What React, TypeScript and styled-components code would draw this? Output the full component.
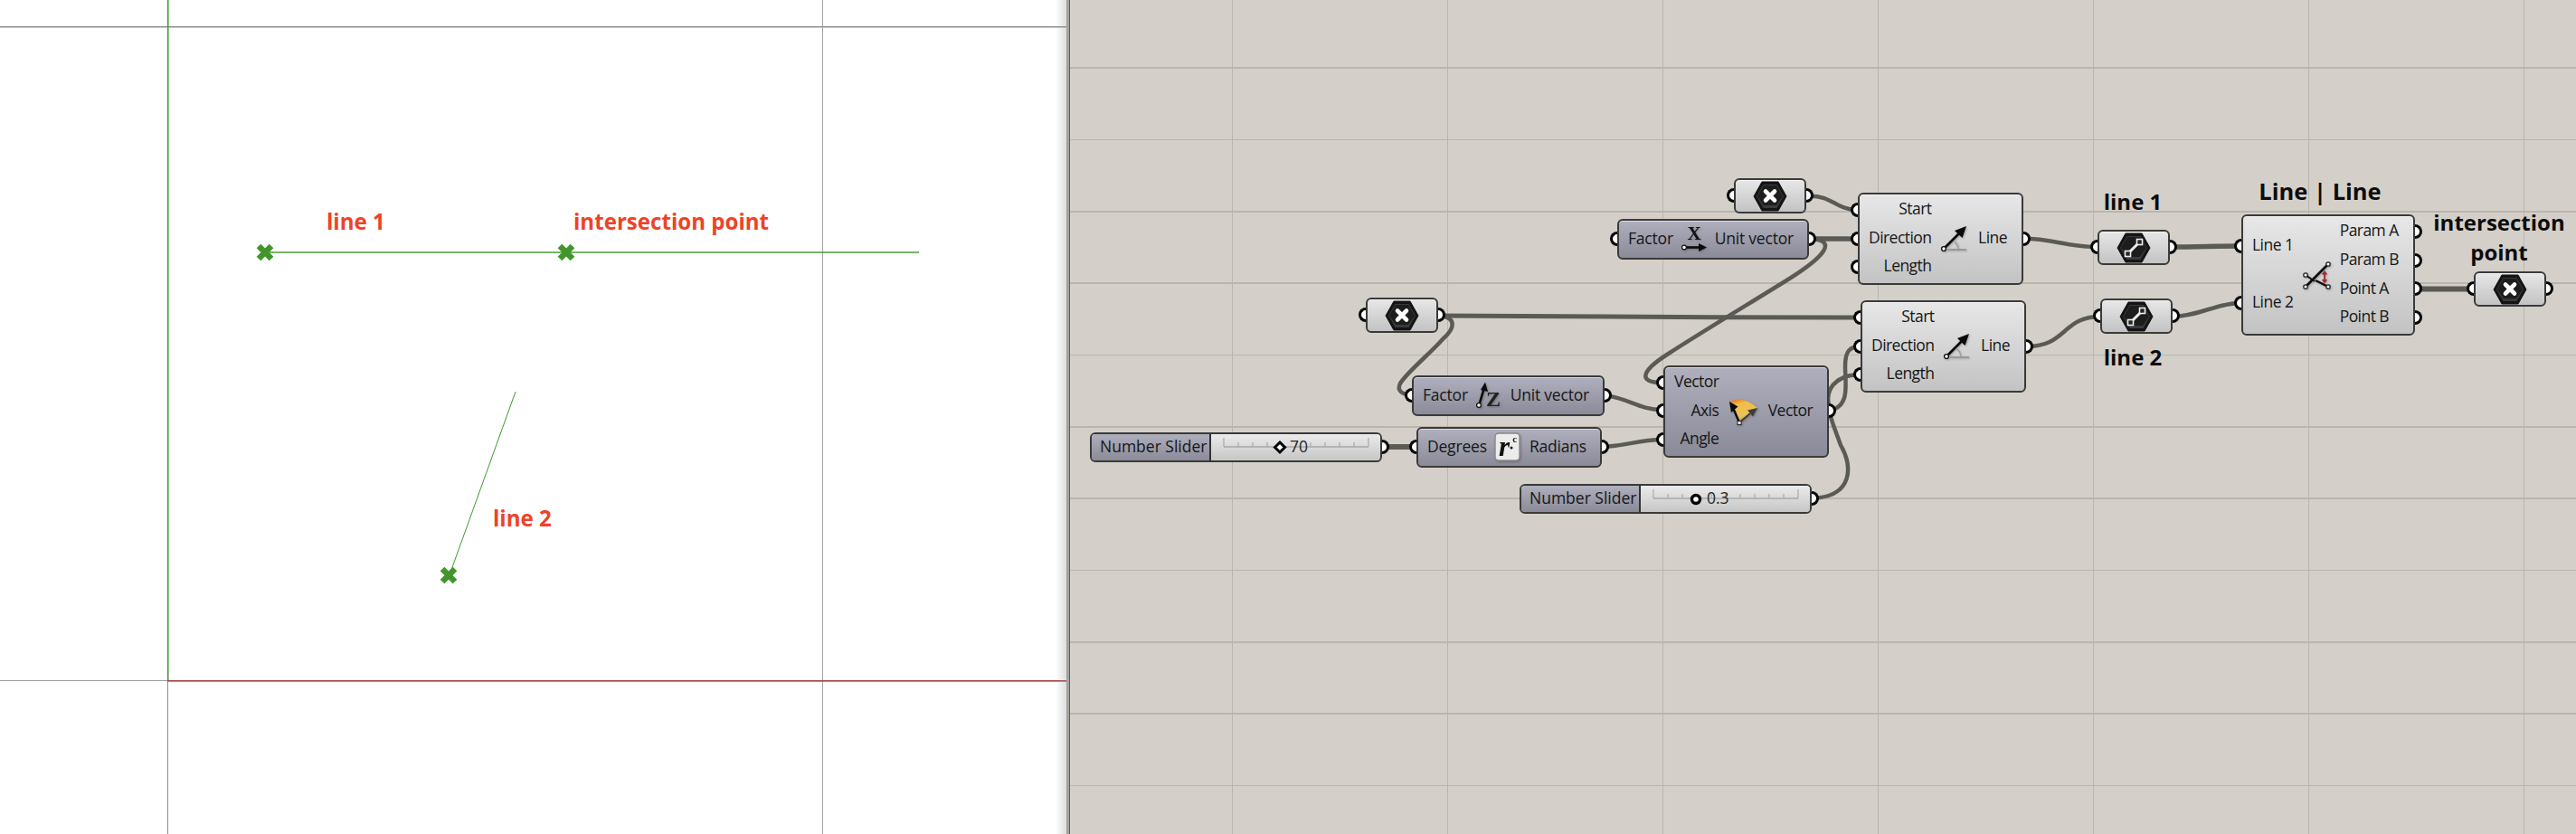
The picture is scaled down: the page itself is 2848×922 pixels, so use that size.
import React from "react";
import styled, { createGlobalStyle } from "styled-components";

const CANVAS_X = 1183;

const Global = createGlobalStyle`
  html, body { margin: 0; padding: 0; background: #fff; }
  body { font-family: "Open Sans", "Noto Sans", sans-serif; }
`;

const Page = styled.div`
  display: flex;
  width: 2848px;
  height: 922px;
  overflow: hidden;
`;

const Viewport = styled.section`
  position: relative;
  flex: 0 0 1179px;
  height: 922px;
  background: #fff;
  overflow: hidden;
  &::after {
    content: "";
    position: absolute;
    top: 0;
    right: 0;
    bottom: 0;
    width: 12px;
    background: linear-gradient(to right, rgba(150, 150, 150, 0), rgba(150, 150, 150, 0.32));
  }
`;

const Splitter = styled.div`
  flex: 0 0 3px;
  background: #a2a2a2;
  border-right: 1px solid #5f5f5f;
`;

const Canvas = styled.section`
  position: relative;
  flex: 1;
  height: 922px;
  background: #d4d0c9;
  overflow: hidden;
`;

const Layer = styled.svg`
  position: absolute;
  inset: 0;
  width: 100%;
  height: 100%;
`;

const ViewLabel = styled.span<{ $x: number; $y: number }>`
  position: absolute;
  left: ${(p) => p.$x}px;
  top: ${(p) => p.$y}px;
  transform: translateY(-50%);
  font-family: "Open Sans", sans-serif;
  font-weight: 700;
  font-size: 24.1px;
  line-height: 1;
  white-space: nowrap;
  color: #ee4326;
`;

const GroupLabel = styled.span<{ $x: number; $y: number }>`
  position: absolute;
  left: ${(p) => p.$x - CANVAS_X}px;
  top: ${(p) => p.$y}px;
  transform: translate(-50%, -50%);
  font-family: "Open Sans", sans-serif;
  font-weight: 700;
  font-size: 24px;
  line-height: 1;
  white-space: nowrap;
  color: #0c0c0c;
`;

const TitleLabel = styled(GroupLabel)`
  font-size: 25.5px;
`;

const Node = styled.div<{ $x: number; $y: number; $w: number; $h: number }>`
  position: absolute;
  left: ${(p) => p.$x - CANVAS_X}px;
  top: ${(p) => p.$y}px;
  width: ${(p) => p.$w}px;
  height: ${(p) => p.$h}px;
`;

const Body = styled.div<{ $dark?: boolean }>`
  box-sizing: border-box;
  width: 100%;
  height: 100%;
  display: flex;
  align-items: stretch;
  border: 2px solid #3a3a3a;
  border-radius: 6px;
  overflow: hidden;
  color: #161616;
  font-family: "Open Sans", "Noto Sans", sans-serif;
  font-size: 17.5px;
  letter-spacing: -0.55px;
  line-height: 1;
  white-space: nowrap;
  background: ${(p) =>
    p.$dark
      ? "linear-gradient(#afafbd, #8a8a98)"
      : "linear-gradient(#e7e7e7, #c3c3c3)"};
  box-shadow: inset 0 1px 0 rgba(255, 255, 255, 0.55);
`;

const ParamBody = styled(Body)`
  justify-content: center;
  align-items: center;
`;

const Column = styled.div<{ $align: "start" | "end"; $row: number }>`
  display: grid;
  grid-auto-rows: ${(p) => p.$row}px;
  align-content: center;
  justify-items: ${(p) => p.$align};
  align-items: center;
  padding-bottom: 3px;
`;

const Inputs = styled(Column)`
  padding-left: 10px;
`;

const Outputs = styled(Column)`
  padding-right: 16px;
`;

const IconCell = styled.div`
  flex: 1;
  display: flex;
  align-items: center;
  justify-content: center;
  svg {
    filter: drop-shadow(1px 1px 1px rgba(0, 0, 0, 0.25));
  }
`;

const Pair = styled(Body)`
  align-items: center;
  justify-content: space-between;
  padding: 0 15px 1px 10px;
  letter-spacing: -0.2px;
  svg {
    filter: drop-shadow(1px 1px 1px rgba(0, 0, 0, 0.25));
  }
`;

const Port = styled.i<{ $side: "in" | "out"; $y: number }>`
  position: absolute;
  box-sizing: border-box;
  top: ${(p) => p.$y - 8}px;
  ${(p) => (p.$side === "in" ? "right: 100%;" : "left: 100%;")}
  width: 8px;
  height: 16px;
  background: #fff;
  border: 3px solid #050505;
  ${(p) => (p.$side === "in" ? "border-right: 0;" : "border-left: 0;")}
  border-radius: ${(p) => (p.$side === "in" ? "8px 0 0 8px" : "0 8px 8px 0")};
`;

const SliderLabel = styled.div`
  flex: 0 0 auto;
  box-sizing: border-box;
  width: 132px;
  display: flex;
  align-items: center;
  padding: 0 0 2px 9px;
  border-right: 2px solid #333;
  background: linear-gradient(#afafbd, #8a8a98);
  height: 100%;
  letter-spacing: 0;
`;

const SliderTrack = styled.div`
  position: relative;
  flex: 1;
  background: linear-gradient(#ebebeb, #c6c6c6);
`;

const TrackDrawing = styled.svg`
  position: absolute;
  inset: 0;
  width: 100%;
  height: 100%;
`;

const SliderValue = styled.span<{ $x: number }>`
  position: absolute;
  left: ${(p) => p.$x}px;
  top: calc(50% - 1px);
  transform: translateY(-50%);
  color: #262626;
  letter-spacing: 0;
`;

/* ---------- icons ---------- */

const HexIcon: React.FC<{ glyph: "x" | "line" }> = ({ glyph }) => (
  <svg width="38" height="34" viewBox="0 0 38 34">
    <polygon points="1,17 10,1 28,1 37,17 28,33 10,33" fill="#141414" stroke="#141414" strokeWidth="1" strokeLinejoin="round" />
    <polygon points="4,17 11.5,4 26.5,4 34,17 26.5,30 11.5,30" fill="#3a3a3a" />
    <polygon points="5,17 12,5 26,5 33,17 26,27 12,27" fill="#1d1d1d" />
    {glyph === "x" ? (
      <path d="M14 11.5 L24 21.5 M24 11.5 L14 21.5" stroke="#fff" strokeWidth="4.6" strokeLinecap="round" />
    ) : (
      <>
        <path d="M12.5 23.5 L25.5 10.5" stroke="#eee" strokeWidth="3" />
        <rect x="9.5" y="20.5" width="6" height="6" fill="#222" stroke="#eee" strokeWidth="1.6" />
        <rect x="22.5" y="7.5" width="6" height="6" fill="#222" stroke="#eee" strokeWidth="1.6" />
      </>
    )}
  </svg>
);

const LineIcon = () => (
  <svg width="32" height="30" viewBox="0 0 32 30">
    <path d="M8 27 H29" stroke="#8d8d8d" strokeWidth="1.5" />
    <path d="M16 18 Q20 22 20 27" stroke="#9a9a9a" strokeWidth="1.2" fill="none" />
    <path d="M4 26 L23 7" stroke="#0a0a0a" strokeWidth="2.6" />
    <polygon points="29,1 24.5,14 16,6" fill="#0a0a0a" />
    <circle cx="4" cy="26" r="2.4" fill="#fff" stroke="#111" strokeWidth="1.4" />
  </svg>
);

const UnitXIcon = () => (
  <svg width="30" height="38" viewBox="0 -4 30 38">
    <text x="15" y="16" textAnchor="middle" fontFamily="'Liberation Serif', serif" fontWeight="700" fontSize="21" fill="#111">X</text>
    <path d="M4 24.5 H22" stroke="#0a0a0a" strokeWidth="2.6" />
    <polygon points="29,24.5 20,20 20,29" fill="#0a0a0a" />
    <circle cx="4" cy="24.5" r="2.4" fill="#fff" stroke="#111" strokeWidth="1.2" />
  </svg>
);

const UnitZIcon = () => (
  <svg width="30" height="38" viewBox="0 -4 30 38">
    <path d="M4.5 25 L9.5 8" stroke="#0a0a0a" strokeWidth="2.6" />
    <polygon points="11,0.5 14,11 6,9" fill="#0a0a0a" />
    <circle cx="4" cy="26" r="2.4" fill="#fff" stroke="#111" strokeWidth="1.2" />
    <text x="20" y="27" textAnchor="middle" fontFamily="'Liberation Serif', serif" fontWeight="700" fontSize="24" fill="#222">Z</text>
  </svg>
);

const RadiansIcon = () => (
  <svg width="30" height="38" viewBox="0 -3 30 38">
    <rect x="1" y="1" width="27" height="30" rx="4" fill="#ececec" stroke="#8c8c8c" strokeWidth="1.5" />
    <text x="11" y="26" textAnchor="middle" fontFamily="'Liberation Serif', serif" fontStyle="italic" fontWeight="700" fontSize="31" fill="#111">r</text>
    <text x="22.5" y="11" textAnchor="middle" fontFamily="'Liberation Serif', serif" fontWeight="700" fontSize="11" fill="#222">c</text>
    <circle cx="19" cy="17" r="1.5" fill="#111" />
  </svg>
);

const RotateIcon = () => (
  <svg width="34" height="30" viewBox="0 0 34 30">
    <defs>
      <linearGradient id="wedge" x1="0.2" y1="0" x2="0.55" y2="1">
        <stop offset="0" stopColor="#e5792a" />
        <stop offset="0.22" stopColor="#f2bd45" />
        <stop offset="0.7" stopColor="#eac25c" />
        <stop offset="1" stopColor="#b9a26e" />
      </linearGradient>
    </defs>
    <path d="M1 4 Q17 -3 32 11 L12 27 Z" fill="url(#wedge)" />
    <path d="M12 27 L24 17" stroke="#3d3d3d" strokeWidth="2" />
    <polygon points="32,11 21,13.5 27,20.5" fill="#3d3d3d" />
    <path d="M12 27 L5.5 12" stroke="#0a0a0a" strokeWidth="2.4" />
    <polygon points="1,4 10.5,9.5 3,16" fill="#0a0a0a" />
    <rect x="10" y="25.5" width="4" height="4" fill="#fff" stroke="#222" strokeWidth="1" />
  </svg>
);

const IntersectIcon = () => (
  <svg width="32" height="32" viewBox="0 0 32 32">
    <path d="M4 29 L29 4" stroke="#0c0c0c" strokeWidth="2.6" />
    <path d="M4 16 L14 23" stroke="#0c0c0c" strokeWidth="1.8" />
    <path d="M15 22 L29 29" stroke="#0c0c0c" strokeWidth="2.4" />
    <path d="M25 13 V23.5 M22.8 15.5 L25 12.5 L27.2 15.5 M22.8 21 L25 24 L27.2 21" stroke="#a8262c" strokeWidth="1.8" fill="none" />
    <g fill="#fff" stroke="#222" strokeWidth="1.3">
      <circle cx="4" cy="29" r="2.2" />
      <circle cx="29" cy="4" r="2.2" />
      <circle cx="4" cy="16" r="2.2" />
      <circle cx="29" cy="29" r="2.2" />
    </g>
  </svg>
);

const Ticks: React.FC<{ from: number; count: number }> = ({ from, count }) => (
  <>
    <path d={`M${from} 14 H${from + (count - 1) * 16}`} stroke="#a9a9a9" strokeWidth="1.6" />
    {Array.from({ length: count }, (_, i) => {
      const edge = i === 0 || i === count - 1;
      return (
        <path
          key={i}
          d={`M${from + i * 16} ${edge ? 4 : 9} V14`}
          stroke="#a9a9a9"
          strokeWidth="1.2"
        />
      );
    })}
  </>
);

/* ---------- data ---------- */

const WIRES: { d: string; w?: number }[] = [
  { d: "M2000 216.7 C2025 216 2030 232 2054 232" },
  { d: "M2003 264 H2054", w: 5.5 },
  { d: "M2003 264 C2030 266 2021 282 1972 312 C1930 338 1880 368 1843 392 C1815 410 1810 423 1838 423" },
  { d: "M1590 349 C1700 350 1900 351 2057 351", w: 5 },
  { d: "M1590 349 C1610 350 1610 362 1595 375 C1580 392 1555 412 1548 424 C1544 432 1550 436 1561 437" },
  { d: "M1774 437 C1800 440 1812 453 1838 453" },
  { d: "M1528 494 H1565", w: 6 },
  { d: "M1771 494 C1800 493 1810 486 1838 486" },
  { d: "M2022 454 C2046 450 2040 425 2040 405 C2040 388 2045 383 2057 383" },
  { d: "M2003 551 C2050 549 2048 515 2035 492 C2028 472 2021 458 2021 440 C2022 425 2035 414 2057 414" },
  { d: "M2237 263.5 C2270 264 2285 273 2319 273" },
  { d: "M2400 273 C2430 273 2450 272 2478 272", w: 5.5 },
  { d: "M2241 383 C2285 383 2280 350 2322 350" },
  { d: "M2402 350 C2430 350 2450 335 2478 335" },
  { d: "M2670 319.5 H2736", w: 6 },
];

const GRID_X = [1362.5, 1600.5, 1838.5, 2076.5, 2314.5, 2552.5, 2790.5];
const GRID_Y: [number, number][] = [
  [75, 2], [154.5, 1], [234, 2], [313, 2], [392.5, 1], [472, 2],
  [551, 2], [630.5, 1], [710, 2], [789, 2], [868.5, 1],
];

const X_MARKS: [number, number][] = [[293, 279], [626, 279], [496, 636]];

const HexParam: React.FC<{ x: number; y: number; glyph: "x" | "line" }> = ({ x, y, glyph }) => (
  <Node $x={x} $y={y} $w={80} $h={39}>
    <Port $side="in" $y={19} />
    <ParamBody><HexIcon glyph={glyph} /></ParamBody>
    <Port $side="out" $y={19} />
  </Node>
);

const LineNode: React.FC<{ x: number; y: number }> = ({ x, y }) => (
  <Node $x={x} $y={y} $w={183} $h={102}>
    <Port $side="in" $y={19} />
    <Port $side="in" $y={51} />
    <Port $side="in" $y={82} />
    <Body>
      <Inputs $align="end" $row={31.6}><span>Start</span><span>Direction</span><span>Length</span></Inputs>
      <IconCell><LineIcon /></IconCell>
      <Outputs $align="start" $row={31.6}><span>Line</span></Outputs>
    </Body>
    <Port $side="out" $y={51} />
  </Node>
);

export default function App() {
  return (
    <Page>
      <Global />
      <Viewport>
        <Layer viewBox="0 0 1179 922">
          <rect x="0" y="29" width="1179" height="1.5" fill="#8e8e8e" />
          <rect x="909" y="0" width="1" height="922" fill="#a3a3a3" />
          <rect x="185" y="753" width="1" height="169" fill="#8e8e8e" />
          <rect x="0" y="752" width="185" height="1" fill="#9a9a9a" />
          <rect x="185" y="0" width="1.5" height="753" fill="#3f9a2f" />
          <rect x="185" y="752" width="994" height="1.6" fill="#a23c3e" />
          <path d="M293 279 H1016" stroke="#4a9a38" strokeWidth="1.5" />
          <path d="M570 433 L499 630" stroke="#3f9a2f" strokeWidth="1" />
          {X_MARKS.map(([x, y]) => (
            <path
              key={x}
              d={`M${x - 7} ${y - 7} L${x + 7} ${y + 7} M${x + 7} ${y - 7} L${x - 7} ${y + 7}`}
              stroke="#41962b"
              strokeWidth="6.6"
            />
          ))}
        </Layer>
        <ViewLabel $x={361} $y={244.5}>line 1</ViewLabel>
        <ViewLabel $x={634} $y={244.5}>intersection point</ViewLabel>
        <ViewLabel $x={545} $y={572.5}>line 2</ViewLabel>
      </Viewport>
      <Splitter />
      <Canvas>
        <Layer viewBox={`${CANVAS_X} 0 1665 922`}>
          {GRID_X.map((x) => (
            <rect key={x} x={x - 0.5} y="0" width="1" height="922" fill="#b9b6ae" />
          ))}
          {GRID_Y.map(([y, t]) => (
            <rect key={y} x={CANVAS_X} y={y - t / 2} width="1665" height={t} fill="#b9b6ae" />
          ))}
          {WIRES.map((wire, i) => (
            <path key={i} d={wire.d} fill="none" stroke="#5b5a55" strokeWidth={wire.w ?? 4.5} />
          ))}
        </Layer>

        <GroupLabel $x={2358} $y={223}>line 1</GroupLabel>
        <GroupLabel $x={2358} $y={395}>line 2</GroupLabel>
        <TitleLabel $x={2565} $y={211.5}>Line | Line</TitleLabel>
        <GroupLabel $x={2763} $y={246}>intersection</GroupLabel>
        <GroupLabel $x={2763} $y={279}>point</GroupLabel>

        <HexParam x={1917} y={197} glyph="x" />
        <HexParam x={1510} y={329} glyph="x" />
        <HexParam x={2319} y={254} glyph="line" />
        <HexParam x={2322} y={330} glyph="line" />
        <HexParam x={2735} y={300} glyph="x" />

        <Node $x={1788} $y={242} $w={212} $h={45}>
          <Port $side="in" $y={22} />
          <Pair $dark><span>Factor</span><UnitXIcon /><span>Unit vector</span></Pair>
          <Port $side="out" $y={22} />
        </Node>

        <Node $x={1561} $y={415} $w={213} $h={45}>
          <Port $side="in" $y={22} />
          <Pair $dark><span>Factor</span><UnitZIcon /><span>Unit vector</span></Pair>
          <Port $side="out" $y={22} />
        </Node>

        <Node $x={1566} $y={472} $w={205} $h={45}>
          <Port $side="in" $y={22} />
          <Pair $dark><span>Degrees</span><RadiansIcon /><span>Radians</span></Pair>
          <Port $side="out" $y={22} />
        </Node>

        <LineNode x={2054} y={213} />
        <LineNode x={2057} y={332} />

        <Node $x={1839} $y={404} $w={183} $h={102}>
          <Port $side="in" $y={19} />
          <Port $side="in" $y={50} />
          <Port $side="in" $y={82} />
          <Body $dark>
            <Inputs $align="end" $row={31.6}><span>Vector</span><span>Axis</span><span>Angle</span></Inputs>
            <IconCell><RotateIcon /></IconCell>
            <Outputs $align="start" $row={31.6}><span>Vector</span></Outputs>
          </Body>
          <Port $side="out" $y={50} />
        </Node>

        <Node $x={2478} $y={237} $w={192} $h={134}>
          <Port $side="in" $y={35} />
          <Port $side="in" $y={98} />
          <Body>
            <Inputs $align="start" $row={63}><span>Line 1</span><span>Line 2</span></Inputs>
            <IconCell><IntersectIcon /></IconCell>
            <Outputs $align="start" $row={31.6}><span>Param A</span><span>Param B</span><span>Point A</span><span>Point B</span></Outputs>
          </Body>
          <Port $side="out" $y={19} />
          <Port $side="out" $y={50.5} />
          <Port $side="out" $y={82} />
          <Port $side="out" $y={114} />
        </Node>

        <Node $x={1205} $y={478} $w={323} $h={33}>
          <Body>
            <SliderLabel>Number Slider</SliderLabel>
            <SliderTrack>
              <TrackDrawing>
                <Ticks from={14} count={11} />
                <polygon points="76,9 81.5,14.5 76,20 70.5,14.5" fill="#fff" stroke="#000" strokeWidth="3" />
              </TrackDrawing>
              <SliderValue $x={87}>70</SliderValue>
            </SliderTrack>
          </Body>
          <Port $side="out" $y={16} />
        </Node>

        <Node $x={1680} $y={535} $w={323} $h={33}>
          <Body>
            <SliderLabel>Number Slider</SliderLabel>
            <SliderTrack>
              <TrackDrawing>
                <Ticks from={14} count={11} />
                <circle cx="61" cy="15" r="4.5" fill="#fff" stroke="#000" strokeWidth="3.4" />
              </TrackDrawing>
              <SliderValue $x={73}>0.3</SliderValue>
            </SliderTrack>
          </Body>
          <Port $side="out" $y={16} />
        </Node>
      </Canvas>
    </Page>
  );
}
